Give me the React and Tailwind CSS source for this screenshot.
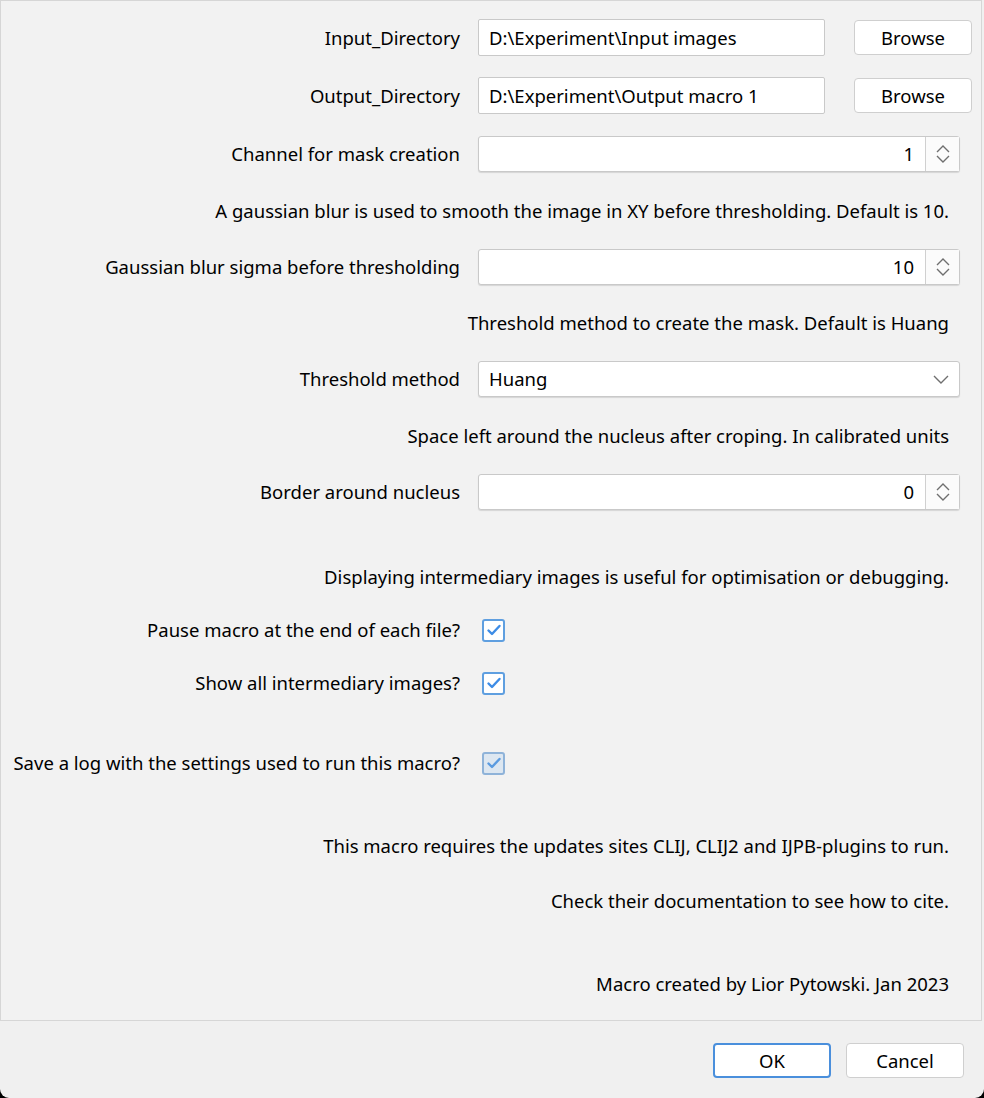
import React from "react";

const font = { fontFamily: '"Noto Sans", "Open Sans", sans-serif' };

function Spinner({ value }) {
  return (
    <div className="flex h-[36px] w-[482px] rounded-[3px] border border-[#c9c9c9] bg-white shadow-[0_1px_1px_rgba(0,0,0,0.12)]">
      <div className="flex flex-1 items-center justify-end pr-[11px] text-[18.5px] text-black">{value}</div>
      <div className="flex w-[34px] items-center justify-center border-l border-[#d0d0d0] bg-[#fbfbfb]">
        <svg width="18" height="24" viewBox="0 0 18 24" fill="none" stroke="#6f6f6f" strokeWidth="1.4">
          <path d="M3 10 L9 4 L15 10" />
          <path d="M3 14 L9 20 L15 14" />
        </svg>
      </div>
    </div>
  );
}

function TextField({ value }) {
  return (
    <div className="flex h-[37px] w-[347px] items-center rounded-[2px] border border-[#c9c9c9] bg-white pl-[10px] text-[18.5px] text-black">
      {value}
    </div>
  );
}

function Button({ children, focus }) {
  return (
    <div
      className={
        "flex h-[35px] w-[118px] items-center justify-center rounded-[4px] bg-white text-[18.5px] text-black " +
        (focus ? "border-2 border-[#4a8fdc]" : "border border-[#cfcfcf]")
      }
    >
      {children}
    </div>
  );
}

function Check({ disabled }) {
  return (
    <div
      className={
        "flex h-[23px] w-[23px] items-center justify-center rounded-[3px] border-2 " +
        (disabled ? "border-[#8fb3d9] bg-[#dde7f1]" : "border-[#5f9fe0] bg-white")
      }
    >
      <svg width="16" height="14" viewBox="0 0 16 14" fill="none" stroke={disabled ? "#5b9be0" : "#3d8ce6"} strokeWidth="2.4" strokeLinecap="round" strokeLinejoin="round">
        <path d="M2.5 7.5 L6 11 L13.5 3" />
      </svg>
    </div>
  );
}

function Row({ label, children, className = "" }) {
  return (
    <div className={"flex items-center " + className}>
      <div className="w-[459px] whitespace-nowrap text-right text-[18.5px] text-black">{label}</div>
      <div className="ml-[18px] flex items-center">{children}</div>
    </div>
  );
}

function Note({ children, className = "" }) {
  return (
    <div className={"flex h-[24px] items-center justify-end whitespace-nowrap pr-[32px] text-[18.5px] text-black " + className}>{children}</div>
  );
}

export default function App() {
  return (
    <div className="h-[1098px] w-[984px] bg-black" style={font}>
      <div className="flex h-full w-full flex-col rounded-b-[9px] bg-[#f0f0f0]">
        <div className="h-[1021px] w-[982px] border border-[#d6d6d6] bg-[#f2f2f2] pt-[18px]">
          <Row label="Input_Directory">
            <TextField value="D:\Experiment\Input images" />
            <div className="ml-[29px]">
              <Button>Browse</Button>
            </div>
          </Row>
          <Row label="Output_Directory" className="mt-[21px]">
            <TextField value="D:\Experiment\Output macro 1" />
            <div className="ml-[29px]">
              <Button>Browse</Button>
            </div>
          </Row>
          <Row label="Channel for mask creation" className="mt-[22px]">
            <Spinner value="1" />
          </Row>
          <Note className="mt-[27px]">A gaussian blur is used to smooth the image in XY before thresholding. Default is 10.</Note>
          <Row label="Gaussian blur sigma before thresholding" className="mt-[26px]">
            <Spinner value="10" />
          </Row>
          <Note className="mt-[26px]">Threshold method to create the mask. Default is Huang</Note>
          <Row label="Threshold method" className="mt-[26px]">
            <div className="flex h-[36px] w-[482px] items-center justify-between rounded-[3px] border border-[#c9c9c9] bg-white pl-[10px] pr-[9px] text-[18.5px] text-black shadow-[0_1px_1px_rgba(0,0,0,0.12)]">
              <span>Huang</span>
              <svg width="18" height="12" viewBox="0 0 18 12" fill="none" stroke="#6f6f6f" strokeWidth="1.4">
                <path d="M2 3 L9 10 L16 3" />
              </svg>
            </div>
          </Row>
          <Note className="mt-[27px]">Space left around the nucleus after croping. In calibrated units</Note>
          <Row label="Border around nucleus" className="mt-[26px]">
            <Spinner value="0" />
          </Row>
          <Note className="mt-[55px]">Displaying intermediary images is useful for optimisation or debugging.</Note>
          <Row label="Pause macro at the end of each file?" className="mt-[29px] h-[24px]">
            <div className="ml-[4px]">
              <Check />
            </div>
          </Row>
          <Row label="Show all intermediary images?" className="mt-[29px] h-[24px]">
            <div className="ml-[4px]">
              <Check />
            </div>
          </Row>
          <Row label="Save a log with the settings used to run this macro?" className="mt-[56px] h-[24px]">
            <div className="ml-[4px]">
              <Check disabled />
            </div>
          </Row>
          <Note className="mt-[59px]">This macro requires the updates sites CLIJ, CLIJ2 and IJPB-plugins to run.</Note>
          <Note className="mt-[31px]">Check their documentation to see how to cite.</Note>
          <Note className="mt-[59px]">Macro created by Lior Pytowski. Jan 2023</Note>
        </div>
        <div className="flex justify-end gap-[15px] pr-[20px] pt-[22px]">
          <Button focus>OK</Button>
          <Button>Cancel</Button>
        </div>
      </div>
    </div>
  );
}
